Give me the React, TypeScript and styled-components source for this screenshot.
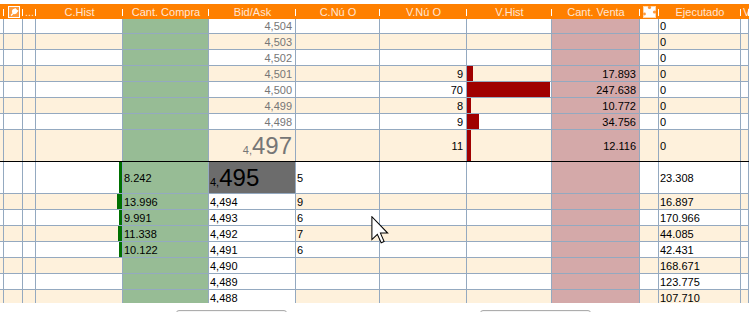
import * as React from 'react';
import styled, { createGlobalStyle } from 'styled-components';

const GRID = '#94a9c0';
const CREAM = '#fef1dc';
const BUY = '#97bc95';
const SELL = '#d4a9a9';
const COLS = '4px 19px 13px 87px 86px 87px 84px 87px 85px 88px 19px 82px 1fr';

const GlobalStyle = createGlobalStyle`
  html, body {
    margin: 0;
    padding: 0;
    background: #fff;
    overflow: hidden;
  }
  body {
    font-family: "Liberation Sans", Arial, sans-serif;
    font-size: 11px;
  }
`;

const Screen = styled.div`
  position: relative;
  width: 749px;
  height: 312px;
  padding-top: 4px;
  box-sizing: border-box;
  overflow: hidden;
`;

const HeaderBar = styled.div`
  display: grid;
  grid-template-columns: ${COLS};
  height: 15px;
  background: #ff8000;
  color: #ffe6d6;
`;

const HeadCell = styled.div<{ $align?: string }>`
  position: relative;
  display: flex;
  align-items: center;
  justify-content: ${(p) => p.$align || 'center'};
  padding-left: ${(p) => (p.$align === 'flex-start' ? '2px' : '0')};
  white-space: nowrap;
  overflow: hidden;

  &::after {
    content: '';
    position: absolute;
    right: 0;
    top: 5px;
    width: 1px;
    height: 7px;
    background: #fff;
  }
`;

const Body = styled.div`
  height: 284px;
  overflow: hidden;
`;

const Row = styled.div<{ $h: number; $stripe: boolean; $divider?: boolean }>`
  display: grid;
  grid-template-columns: ${COLS};
  height: ${(p) => p.$h}px;
  box-sizing: border-box;
  background: ${(p) => (p.$stripe ? CREAM : '#fff')};
  border-bottom: 1px solid ${(p) => (p.$divider ? '#000' : GRID)};
`;

const Cell = styled.div<{ $bg?: string; $align?: 'left' | 'right'; $color?: string; $bar?: boolean }>`
  display: flex;
  align-items: center;
  justify-content: ${(p) => (p.$align === 'right' ? 'flex-end' : 'flex-start')};
  padding: ${(p) => (p.$bar ? '0' : p.$align === 'right' ? '0 3px 0 0' : '0 0 0 1px')};
  border-right: 1px solid ${GRID};
  background: ${(p) => p.$bg || 'transparent'};
  color: ${(p) => p.$color || '#000'};
  white-space: nowrap;
  overflow: hidden;
  min-width: 0;
`;

const BuyBar = styled.div`
  height: 100%;
  background: #007000;
`;

const SellBar = styled.div`
  height: 100%;
  background: #a00000;
`;

const Price = styled.span<{ $color: string }>`
  color: ${(p) => p.$color};
`;

const Prefix = styled.span`
  font-size: 11px;
`;

const Big = styled.span`
  font-size: 24px;
  line-height: 24px;
`;

const Footer = styled.div`
  display: flex;
  gap: 193px;
  padding: 7px 0 0 176px;
`;

const FooterButton = styled.div`
  width: 109px;
  height: 20px;
  border: 1px solid #adadad;
  border-radius: 3px;
  background: #f4f4f4;
`;

const Cursor = styled.svg`
  position: absolute;
  left: 371px;
  top: 216px;
`;

const ToolIcon = () => (
  <svg width="12" height="12" viewBox="0 0 12 12">
    <rect x="0.5" y="0.5" width="11" height="11" fill="#ff9a3c" stroke="#fff" />
    <path d="M3 9.5 L6.5 6 M6 3.5 a2 2 0 1 0 2.5 2.5 L9.5 5 L8.5 4.5 L7.5 3 Z" stroke="#fff" strokeWidth="1.4" fill="#fff" />
  </svg>
);

const PuzzleIcon = () => (
  <svg width="13" height="12" viewBox="0 0 13 12">
    <rect x="0.5" y="0.5" width="12" height="11" fill="#fff" stroke="#ffd9b0" />
    <circle cx="6.5" cy="1.5" r="1.6" fill="#ff9a3c" />
    <circle cx="11.5" cy="6" r="1.6" fill="#ff9a3c" />
    <circle cx="1.5" cy="8" r="1.4" fill="#ff9a3c" />
  </svg>
);

type TopRow = { bid: string; vnu?: string; vh?: number; venta?: string };
type BottomRow = { bid: string; compra?: string; ch?: number; cnu?: string; ej: string };

const topRows: TopRow[] = [
  { bid: '4,504' },
  { bid: '4,503' },
  { bid: '4,502' },
  { bid: '4,501', vnu: '9', vh: 6, venta: '17.893' },
  { bid: '4,500', vnu: '70', vh: 83, venta: '247.638' },
  { bid: '4,499', vnu: '8', vh: 4, venta: '10.772' },
  { bid: '4,498', vnu: '9', vh: 12, venta: '34.756' },
];

const bottomRows: BottomRow[] = [
  { compra: '13.996', ch: 5, bid: '4,494', cnu: '9', ej: '16.897' },
  { compra: '9.991', ch: 3, bid: '4,493', cnu: '6', ej: '170.966' },
  { compra: '11.338', ch: 4, bid: '4,492', cnu: '7', ej: '44.085' },
  { compra: '10.122', ch: 3, bid: '4,491', cnu: '6', ej: '42.431' },
  { bid: '4,490', ej: '168.671' },
  { bid: '4,489', ej: '123.775' },
  { bid: '4,488', ej: '107.710' },
];

const Lead = () => (
  <>
    <Cell />
    <Cell />
    <Cell />
  </>
);

export default function App() {
  return (
    <Screen>
      <GlobalStyle />
      <HeaderBar>
        <HeadCell />
        <HeadCell><ToolIcon /></HeadCell>
        <HeadCell>...</HeadCell>
        <HeadCell>C.Hist</HeadCell>
        <HeadCell>Cant. Compra</HeadCell>
        <HeadCell>Bid/Ask</HeadCell>
        <HeadCell>C.Nú O</HeadCell>
        <HeadCell>V.Nú O</HeadCell>
        <HeadCell>V.Hist</HeadCell>
        <HeadCell>Cant. Venta</HeadCell>
        <HeadCell><PuzzleIcon /></HeadCell>
        <HeadCell>Ejecutado</HeadCell>
        <HeadCell $align="flex-start">V.Hist</HeadCell>
      </HeaderBar>

      <Body>
        {topRows.map((r, i) => (
          <Row key={r.bid} $h={i === 0 ? 15 : 16} $stripe={i % 2 === 1}>
            <Lead />
            <Cell />
            <Cell $bg={BUY} />
            <Cell $align="right" $color="#767676">{r.bid}</Cell>
            <Cell />
            <Cell $align="right">{r.vnu}</Cell>
            <Cell $bar>{r.vh ? <SellBar style={{ width: r.vh }} /> : null}</Cell>
            <Cell $bg={SELL} $align="right">{r.venta}</Cell>
            <Cell />
            <Cell>0</Cell>
            <Cell />
          </Row>
        ))}

        <Row $h={32} $stripe $divider>
          <Lead />
          <Cell />
          <Cell $bg={BUY} />
          <Cell $align="right">
            <Price $color="#767676"><Prefix>4,</Prefix><Big>497</Big></Price>
          </Cell>
          <Cell />
          <Cell $align="right">11</Cell>
          <Cell $bar><SellBar style={{ width: 4 }} /></Cell>
          <Cell $bg={SELL} $align="right">12.116</Cell>
          <Cell />
          <Cell>0</Cell>
          <Cell />
        </Row>

        <Row $h={32} $stripe={false}>
          <Lead />
          <Cell $bar style={{ justifyContent: 'flex-end' }}><BuyBar style={{ width: 3 }} /></Cell>
          <Cell $bg={BUY}>8.242</Cell>
          <Cell $bg="#6c6c6c">
            <Price $color="#000"><Prefix>4,</Prefix><Big>495</Big></Price>
          </Cell>
          <Cell>5</Cell>
          <Cell />
          <Cell />
          <Cell $bg={SELL} />
          <Cell />
          <Cell>23.308</Cell>
          <Cell />
        </Row>

        {bottomRows.map((r, i) => (
          <Row key={r.bid} $h={16} $stripe={i % 2 === 0}>
            <Lead />
            <Cell $bar style={{ justifyContent: 'flex-end' }}>
              {r.ch ? <BuyBar style={{ width: r.ch }} /> : null}
            </Cell>
            <Cell $bg={BUY}>{r.compra}</Cell>
            <Cell $bg="#fff">{r.bid}</Cell>
            <Cell>{r.cnu}</Cell>
            <Cell />
            <Cell />
            <Cell $bg={SELL} />
            <Cell />
            <Cell>{r.ej}</Cell>
            <Cell />
          </Row>
        ))}
      </Body>

      <Footer>
        <FooterButton />
        <FooterButton />
      </Footer>

      <Cursor width="18" height="28" viewBox="0 0 12 19">
        <path d="M0.5 0.5 L0.5 16 L4.2 12.4 L6.8 18.2 L8.8 17.3 L6.3 11.6 L11.2 11.6 Z" fill="#fff" stroke="#000" strokeWidth="0.7" strokeLinejoin="miter" />
      </Cursor>
    </Screen>
  );
}
